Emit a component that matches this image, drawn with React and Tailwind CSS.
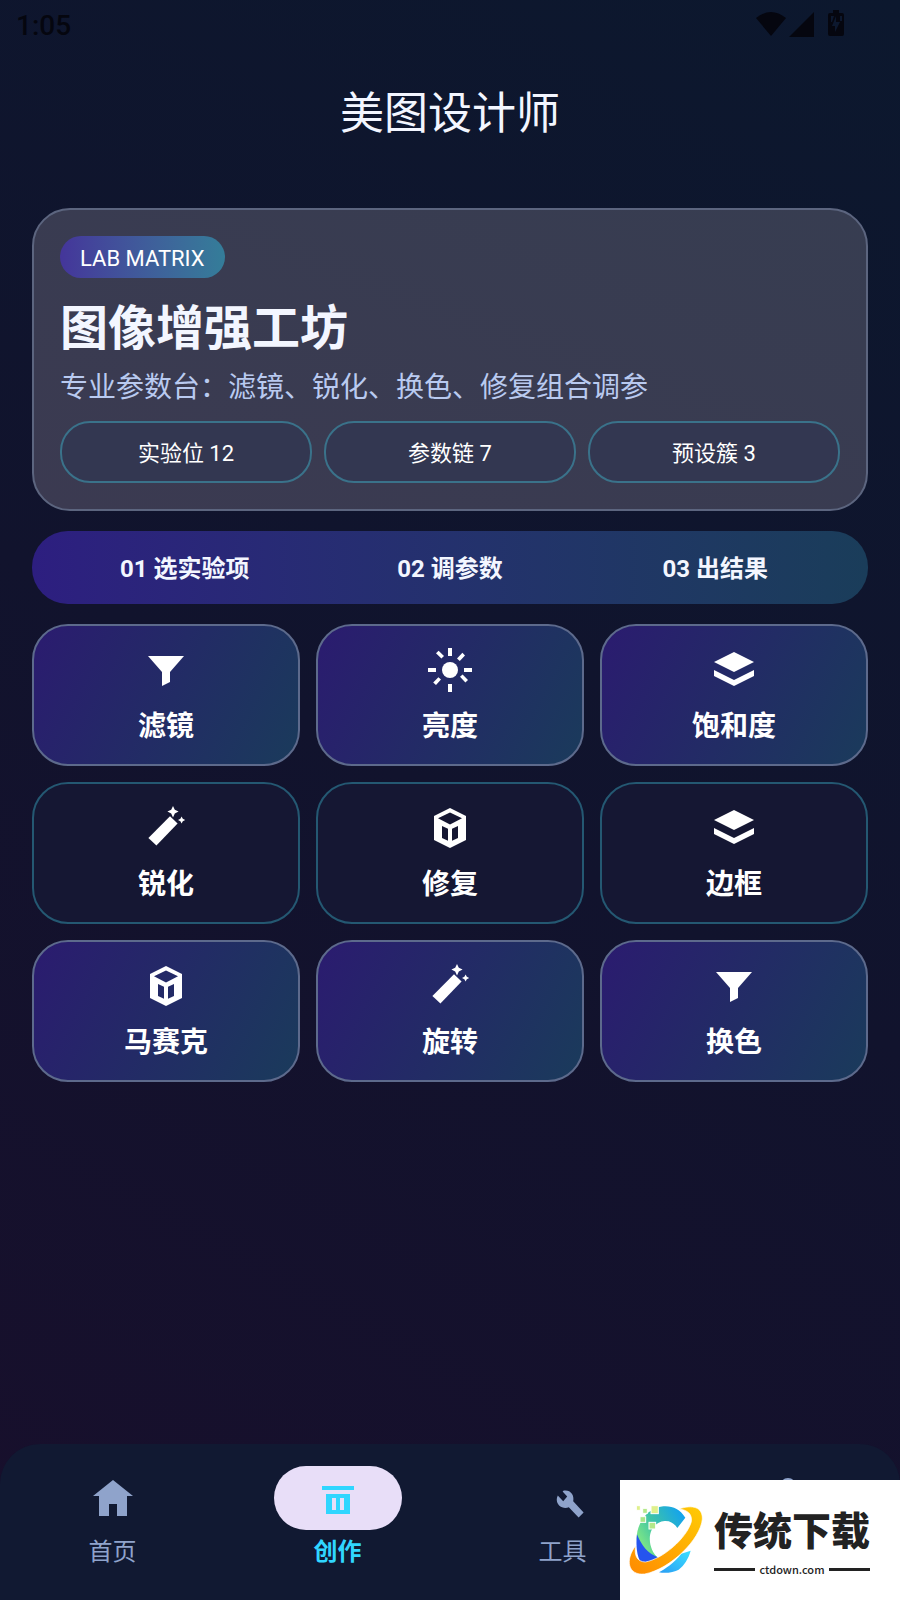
import React, { useState } from "react";

const icons = {
  filter: <path d="M3 5h18l-7 8v5l-4 2v-7z" />,
  sun: (
    <>
      <circle cx="12" cy="12" r="4" />
      <path d="M11 1h2v4h-2zM11 19h2v4h-2zM1 11h4v2H1zM19 11h4v2h-4z" />
      <path d="M6.3 2.4L9 5 7.7 6.3 5 3.6zM18.2 3.4l1.3 1.3-2.6 2.8-1.4-1.3zM18.3 14.2L21 17l-1.3 1.2L17 15.4zM6.2 15.6l1.3 1.2L5 19.5l-1.4-1.2z" />
    </>
  ),
  layers: <path d="M12 3l10 5-10 5L2 8zM2 12l10 5 10-5v3l-10 5-10-5z" />,
  wand: (
    <>
      <path d="M14 6.1l3.8 3.7L7.2 20.8l-4-3.8z" />
      <path d="M15.5 1l.9 1.9 1.9.9-1.9.9-.9 2-.9-2-1.9-.9 1.9-.9zM19.8 6.3l.6 1.1 1.2.6-1.2.6-.6 1.2-.6-1.2L18 8l1.2-.6z" />
    </>
  ),
  cube: (
    <path
      fillRule="evenodd"
      d="M12 2l8 4v12l-8 4-8-4V6zM12 4.2L6 7.1l6 3.1 6-3.1zM8 11v6l3 1.4v-6zM16 11v6l-3 1.4v-6z"
    />
  ),
  home: <path d="M12 3l10 8h-3v10h-5v-6h-4v6H5V11H2z" />,
  create: <path fillRule="evenodd" d="M4 6h16v2H4zM6 10h12v10H6zM9 12v6h2v-6zM13 12v6h2v-6z" />,
  tools: (
    <path d="M22.3 19.2L17.1 13.6C17.8 10.4 15.6 7.7 12.4 8.3L11.8 8.8l2.3 2.5-2 2.3-2.7-2.8C7.9 13.6 9.8 17 13.1 17c.7 0 1.3-.2 1.8-.4l4.9 5.2z" />
  ),
  profile: <path d="M12 2a4 4 0 1 1 0 8 4 4 0 0 1 0-8zM4 18c0-3 5-4 8-4s8 1 8 4v2H4z" />,
};

function Icon({ name }) {
  return (
    <svg viewBox="0 0 24 24" className="size-12" fill="currentColor" aria-hidden="true">
      {icons[name]}
    </svg>
  );
}

const stats = ["实验位 12", "参数链 7", "预设簇 3"];
const steps = ["01 选实验项", "02 调参数", "03 出结果"];

const tools = [
  { label: "滤镜", icon: "filter", filled: true },
  { label: "亮度", icon: "sun", filled: true },
  { label: "饱和度", icon: "layers", filled: true },
  { label: "锐化", icon: "wand", filled: false },
  { label: "修复", icon: "cube", filled: false },
  { label: "边框", icon: "layers", filled: false },
  { label: "马赛克", icon: "cube", filled: true },
  { label: "旋转", icon: "wand", filled: true },
  { label: "换色", icon: "filter", filled: true },
];

const tabs = [
  { id: "home", label: "首页", icon: "home" },
  { id: "create", label: "创作", icon: "create" },
  { id: "tools", label: "工具", icon: "tools" },
  // icon-only tab
  { id: "profile", icon: "profile" },
];

function StatusBar() {
  return (
    <div className="flex h-12 items-center justify-between pl-4 pr-14 text-[#05060f]">
      <span className="pt-1 text-[28px] leading-8 font-medium">1:05</span>
      <svg viewBox="0 0 88 28" className="h-7 w-[88px]" fill="currentColor" aria-hidden="true">
        <path d="M0 8Q15-4 30 8L15 26z" />
        <path d="M58 2v25H33z" />
        <path
          fillRule="evenodd"
          d="M77 0h6v3h3q2 0 2 2v19q0 2-2 2H74q-2 0-2-2V5q0-2 2-2h3zM80 6l-4 10h3v6l5-10h-4zM75 6v6h1l2-6zM84 6v5h2V6z"
        />
      </svg>
    </div>
  );
}

function SiteLogo() {
  return (
    <svg viewBox="0 0 270 270" className="size-[90px] shrink-0" aria-hidden="true">
      <defs>
        <linearGradient id="arc" x1="0" y1="0.8" x2="1" y2="0.2">
          <stop offset="0" stopColor="#8ff07c" />
          <stop offset="0.45" stopColor="#3fc4a6" />
          <stop offset="1" stopColor="#12a2f0" />
        </linearGradient>
        <linearGradient id="ring" x1="0" y1="1" x2="1" y2="0">
          <stop offset="0" stopColor="#ff8a00" />
          <stop offset="1" stopColor="#ffcb05" />
        </linearGradient>
        <linearGradient id="tail" x1="0" y1="1" x2="1" y2="0">
          <stop offset="0" stopColor="#2a9df4" />
          <stop offset="1" stopColor="#3be0ff" />
        </linearGradient>
      </defs>
      <path d="M105 232C122 222 150 205 172 176L200 167C194 190 180 212 164 224C150 232 125 236 105 232z" fill="url(#tail)" />
      <path
        d="M184 68C168 42 145 32 118 34C70 38 38 85 38 130C40 160 60 195 104 190C66 160 66 84 122 78C140 77 151 86 160 99z"
        fill="url(#arc)"
      />
      <path d="M39 118C35 150 38 185 52 205C70 206 86 200 104 188C70 176 52 150 39 118z" fill="#2554ee" />
      <path
        d="M165 42C205 28 236 36 235 72C230 132 140 222 62 237C12 242 2 195 35 152C30 180 38 200 64 201C116 192 188 130 202 80C205 58 192 45 165 42z"
        fill="url(#ring)"
        stroke="#fff"
        strokeWidth="2"
      />
      <g stroke="#fff" strokeWidth="3">
        <rect x="37" y="32" width="12" height="14" fill="#dff08c" />
        <rect x="56" y="40" width="14" height="15" fill="#b4e88a" />
        <rect x="81" y="32" width="22" height="24" fill="#dff08c" />
        <rect x="48" y="65" width="17" height="17" fill="#a9e58a" />
        <rect x="75" y="82" width="20" height="20" fill="#b4e88a" />
      </g>
    </svg>
  );
}

function Watermark() {
  return (
    <div className="absolute right-0 bottom-0 flex h-[120px] w-[280px] items-center bg-white pl-1 text-[#222]">
      <SiteLogo />
      <div className="w-[156px] pt-1">
        <p className="text-[39px] leading-[50px] font-black">传统下载</p>
        <div className="mt-1 flex items-center gap-1">
          <span className="h-[3px] flex-1 bg-[#222]" />
          <span className="font-['Noto_Sans_CJK_SC',sans-serif] text-[11px] leading-4 font-medium">ctdown.com</span>
          <span className="h-[3px] flex-1 bg-[#222]" />
        </div>
      </div>
    </div>
  );
}

export default function App() {
  const [active, setActive] = useState("create");

  return (
    <div className="relative flex min-h-screen flex-col bg-[linear-gradient(209deg,#0c182e,#11132d_50%,#180f2c)] font-['Roboto','Noto_Sans_CJK_SC',sans-serif] text-[#f3f6ff]">
      <StatusBar />
      <h1 className="mt-[34px] text-center text-[44px] leading-16">美图设计师</h1>

      <main className="mt-[62px] flex flex-col gap-5 px-8">
        <section className="rounded-[38px] border-2 border-[#5c657f] bg-linear-to-bl from-[#373d51] to-[#3b3a51] p-[26px]">
          <span className="inline-block rounded-full bg-linear-to-r from-[#44359a] to-[#347d99] px-5 pt-1 align-top text-[22px] leading-[38px] text-white">
            LAB MATRIX
          </span>
          <h2 className="mt-5 text-[48px] leading-[62px] font-bold">图像增强工坊</h2>
          <p className="mt-2 text-[28px] leading-10 text-[#b9caf0]">
            专业参数台：滤镜、锐化、换色、修复组合调参
          </p>
          <div className="mt-[13px] grid grid-cols-3 gap-3">
            {stats.map((stat) => (
              <span
                key={stat}
                className="rounded-[30px] border-2 border-[#3a728a] bg-[#333751] pt-3.5 pb-2.5 text-center text-[22px] leading-[34px] text-white"
              >
                {stat}
              </span>
            ))}
          </div>
        </section>

        <ol className="flex rounded-[36px] bg-linear-to-r from-[#2d1e80] to-[#1a3d5a] px-5 pt-[18px] pb-[15px]">
          {steps.map((step) => (
            <li key={step} className="flex-1 text-center text-[24px] leading-10 font-bold">
              {step}
            </li>
          ))}
        </ol>

        <div className="grid grid-cols-3 gap-4">
          {tools.map((tool) => (
            <button
              key={tool.label}
              type="button"
              className={`flex flex-col items-center gap-[15px] rounded-[36px] border-2 pt-5 pb-[19px] text-white ${
                tool.filled
                  ? "border-[#5d6a8c] bg-[linear-gradient(118deg,#2b1b70,#1a3b5b)] bg-origin-border"
                  : "border-[#245872] bg-[#151733]"
              }`}
            >
              <Icon name={tool.icon} />
              <span className="text-[28px] leading-9 font-bold">{tool.label}</span>
            </button>
          ))}
        </div>
      </main>

      <nav className="mt-auto flex rounded-t-[40px] bg-[#111932] pt-[22px] pb-[30px]">
        {tabs.map((tab) => {
          const on = tab.id === active;
          return (
            <button
              key={tab.id}
              type="button"
              aria-label={tab.label || "我的"}
              onClick={() => setActive(tab.id)}
              className={`flex flex-1 flex-col items-center gap-1 ${
                on ? "font-bold text-[#30d6ff]" : "text-[#8fa3cb]"
              }`}
            >
              <span
                className={`flex h-16 w-32 items-center justify-center rounded-[32px] ${
                  on ? "bg-[#e8def8]" : ""
                }`}
              >
                <Icon name={tab.icon} />
              </span>
              {tab.label && <span className="text-[24px] leading-9">{tab.label}</span>}
            </button>
          );
        })}
      </nav>

      <Watermark />
    </div>
  );
}
